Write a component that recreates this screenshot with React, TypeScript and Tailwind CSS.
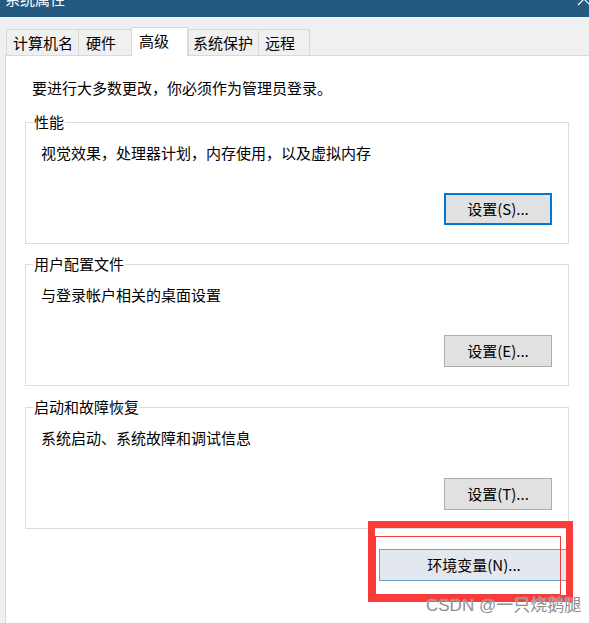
import React from 'react';

const tabs = [
  { label: '计算机名', w: 'w-[72px]', pl: 'pl-[6px]' },
  { label: '硬件', w: 'w-[53px]', pl: 'pl-[7px]' },
  { label: '高级', w: 'w-[57px]', pl: 'pl-[7px]', active: true },
  { label: '系统保护', w: 'w-[70px]', pl: 'pl-[4px]' },
  { label: '远程', w: 'w-[52px]', pl: 'pl-[6px]' },
];

const groups = [
  { title: '性能', desc: '视觉效果，处理器计划，内存使用，以及虚拟内存', btn: '设置(S)...', focused: true, mt: '' },
  { title: '用户配置文件', desc: '与登录帐户相关的桌面设置', btn: '设置(E)...', mt: 'mt-[10px]' },
  { title: '启动和故障恢复', desc: '系统启动、系统故障和调试信息', btn: '设置(T)...', mt: 'mt-[11px]' },
];

const App: React.FC = () => {
  return (
    <div className="relative w-[589px] h-[623px] overflow-hidden bg-[#f0f0f0] text-black text-[15px] leading-[20px] font-['Noto_Sans_CJK_SC',sans-serif] flex flex-col">
      {/* Title bar (cut off at the top of the capture) */}
      <div className="relative h-[17px] shrink-0 overflow-hidden bg-[#235a81]">
        <div className="mt-[-11px] pl-[5px] text-white">系统属性</div>
        <svg className="absolute left-[570px] top-0" width="19" height="17" viewBox="0 0 19 17">
          <path d="M8 -7 L20 5 M20 -7 L8 5" stroke="#ffffff" strokeWidth="1.2" fill="none" />
        </svg>
      </div>

      {/* Tabs */}
      <div className="flex items-end h-[38px] shrink-0 pl-[6px]">
        {tabs.map((t, i) => (
          <div
            key={t.label}
            className={
              t.active
                ? `relative z-10 ${t.w} h-[29px] mb-[-1px] bg-white border border-b-0 border-[#d9d9d9] pl-[7px] pt-[3px]`
                : `${t.w} h-[26px] bg-[#f0f0f0] border-t border-l border-[#d9d9d9] ${t.pl} pt-[3px] ${
                    i === tabs.length - 1 ? 'border-r' : ''
                  }`
            }
          >
            {t.label}
          </div>
        ))}
      </div>

      {/* Panel */}
      <div className="relative flex-1 ml-[5px] bg-white border-t border-l border-[#d9d9d9]">
        <p className="pl-[26px] pt-[22px]">要进行大多数更改，你必须作为管理员登录。</p>

        <div className="ml-[19px] w-[544px] mt-[14px]">
          {groups.map((g) => (
            <fieldset key={g.title} className={`border border-[#dcdcdc] pb-[18px] ${g.mt}`}>
              <legend className="ml-[7px] px-[1px] leading-[20px]">{g.title}</legend>
              <p className="mt-[11px] pl-[15px]">{g.desc}</p>
              <div className="flex justify-end pr-[16px] mt-[30px]">
                <button
                  className={`w-[108px] h-[32px] bg-[#e1e1e1] flex items-center justify-center ${
                    g.focused ? 'border-2 border-[#0078d7]' : 'border border-[#adadad]'
                  }`}
                >
                  {g.btn}
                </button>
              </div>
            </fieldset>
          ))}

          <div className="flex justify-end mt-[20px]">
            <button className="w-[190px] h-[32px] bg-[#e3e8ee] border border-[#6f9fcd] flex items-center justify-center">
              环境变量(N)...
            </button>
          </div>
        </div>
      </div>

      {/* Red annotation boxes */}
      <div className="absolute left-[368px] top-[521px] w-[205px] h-[81px] border-[7px] border-[#fb3a3a] pointer-events-none" />
      <div className="absolute left-[375px] top-[536px] w-[186px] h-[59px] border border-[#f23c3c] pointer-events-none" />

      {/* Watermark */}
      <div className="absolute left-[426px] top-[594px] text-[17px] leading-[20px] text-[#8e8e8e] [text-shadow:0_0_1px_#ffffff] pointer-events-none whitespace-nowrap">
        <span className="font-['Liberation_Sans',sans-serif]">CSDN @</span>
        <span>一只烧鹅腿</span>
      </div>
    </div>
  );
};

export default App;
